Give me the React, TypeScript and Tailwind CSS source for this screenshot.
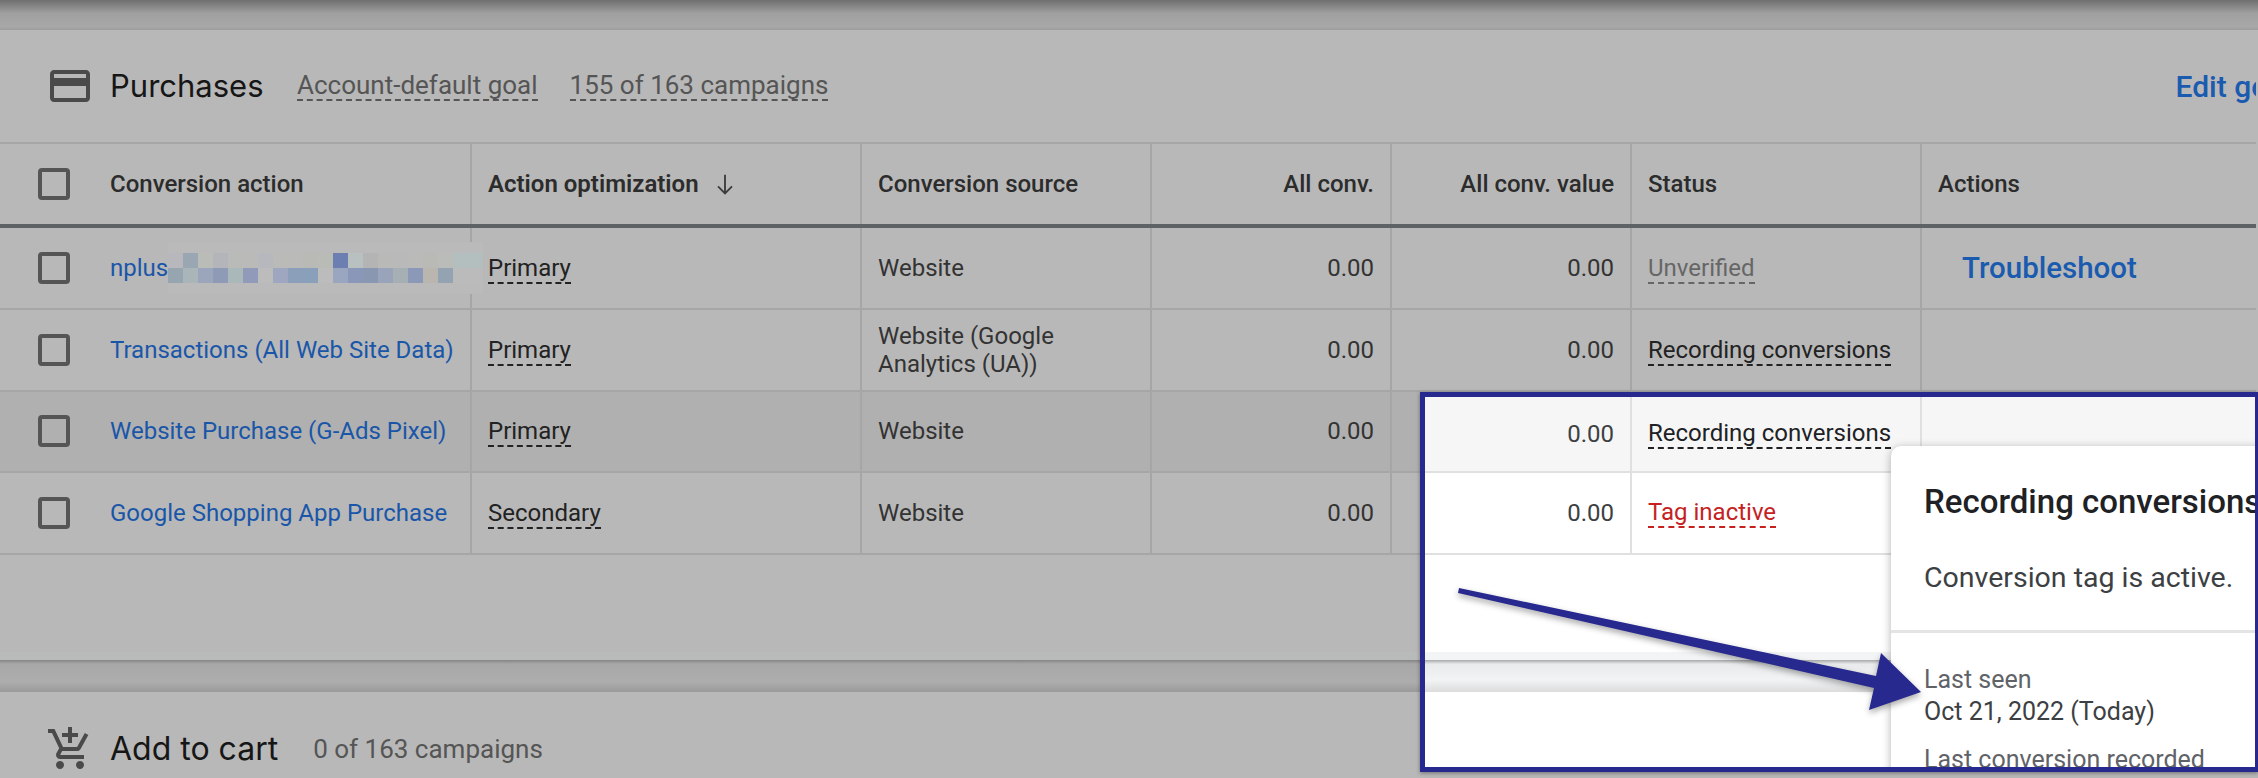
const Dash = ({ children, className = "" }: { children: React.ReactNode; className?: string }) => (
  <span className={`border-b-2 border-dashed leading-[28px] ${className}`}>{children}</span>
);

const Checkbox = () => <div className="w-[32px] h-[32px] rounded-[4px] border-[4px] border-[#555555]" />;

const row1 = ["#b7b7bc","#9aa7b2","#b9bcb7","#b4b4bb","#b9bbb8","#babbb9","#b7b8bd","#babbb9","#babbb9","#b9b9b6","#b9bbb6","#6d7fb0","#b8c1c0","#b3b4b3","#b9b9b7","#b9b9b9","#babab9","#b9bab5","#b9bcb9","#b3bfbf","#b3bfbf"];
const row2 = ["#96a5b0","#a9b5b8","#9ba5bb","#8f9bb6","#abb8ba","#919bb9","#bcbcbc","#9fa6c0","#8c9fba","#8a9fb9","#bcbcbc","#9aa5bf","#8a97b9","#8a97b0","#99a3b9","#a6b0b4","#8b98b8","#bbb5b0","#94a3b1","#bbbbbb","#bbbbbb"];

const Pixels = () => (
  <svg width="315" height="52" viewBox="0 0 315 52" className="shrink-0 -mr-[20px]">
    <rect x="0" y="0" width="315" height="52" fill="#bababa" />
    {row1.map((c, i) => <rect key={i} x={i * 15} y="11" width="15" height="15" fill={c} />)}
    {row2.map((c, i) => <rect key={i} x={i * 15} y="26" width="15" height="15" fill={c} />)}
  </svg>
);

const cols = "grid grid-cols-[472px_390px_290px_240px_240px_290px_1fr]";
const cell = "border-r-2 border-[#a6a6a6] flex items-center";
const num = `${cell} justify-end pr-[16px] text-[#333333]`;
const head = `${cell} text-[24px] font-medium text-[#2c2c2c]`;

type R = { name: string; opt: string; src: React.ReactNode; st: React.ReactNode; h?: boolean };
const rows: R[] = [
  { name: "nplus", opt: "Primary", src: "Website", st: <Dash className="text-[#666666] border-[#666666]">Unverified</Dash> },
  { name: "Transactions (All Web Site Data)", opt: "Primary", src: <span className="leading-[28px]">Website (Google<br />Analytics (UA))</span>, st: <Dash className="text-[#222222] border-[#222222]">Recording conversions</Dash> },
  { name: "Website Purchase (G-Ads Pixel)", opt: "Primary", src: "Website", st: null, h: true },
  { name: "Google Shopping App Purchase", opt: "Secondary", src: "Website", st: null },
];

const HighlightRows = () => (
  <div className="text-[24px]">
    <div className="h-[76px] grid grid-cols-[207px_290px_1fr] bg-[#f6f6f6] border-b-2 border-[#e0e0e0]">
      <div className="border-r-2 border-[#e0e0e0] flex items-center justify-end pr-[16px] text-[#3c4043]">0.00</div>
      <div className="border-r-2 border-[#e0e0e0] flex items-center pl-[16px]"><Dash className="text-[#202124] border-[#202124]">Recording conversions</Dash></div>
      <div />
    </div>
    <div className="h-[82px] grid grid-cols-[207px_290px_1fr] bg-white border-b-2 border-[#e0e0e0]">
      <div className="border-r-2 border-[#e0e0e0] flex items-center justify-end pr-[16px] text-[#3c4043]">0.00</div>
      <div className="border-r-2 border-[#e0e0e0] flex items-center pl-[16px]"><Dash className="text-[#c5221f] border-[#c5221f]">Tag inactive</Dash></div>
      <div />
    </div>
    <div className="h-[97px] bg-white" />
    <div className="h-[8px] bg-[#f3f4f5]" />
    <div className="h-[32px] bg-[linear-gradient(#a8a8a8_0px,#e8eaeb_4px,#f1f3f4_20px,#dcdcdc_32px)]" />
  </div>
);

const Popup = () => (
  <div className="absolute left-[466px] top-[49px] w-[500px] h-[400px] bg-white rounded-tl-[10px] shadow-[0_2px_10px_rgba(0,0,0,0.3)]">
    <div className="h-[187px] border-b-[3px] border-[#e4e4e4] pl-[33px]">
      <div className="pt-[34px] text-[33px] leading-[44px] font-medium text-[#202124] whitespace-nowrap">Recording conversions</div>
      <div className="pt-[38px] text-[28.5px] leading-[32px] text-[#3c4043] whitespace-nowrap">Conversion tag is active.</div>
    </div>
    <div className="pl-[33px] pt-[31px] text-[25px] leading-[32px] whitespace-nowrap">
      <div className="text-[#5f6368]">Last seen</div>
      <div className="text-[#3c4043]">Oct 21, 2022 (Today)</div>
      <div className="pt-[16px] text-[#5f6368]">Last conversion recorded</div>
    </div>
  </div>
);

const Arrow = () => (
  <svg width="490" height="150" viewBox="1450 580 490 150" className="absolute left-[1450px] top-[580px] drop-shadow-[0_3px_3px_rgba(0,0,0,0.35)]">
    <polygon points="1459,588 1876,676 1881,653 1921,692 1869,710 1874,688 1458,593" fill="#28298f" />
  </svg>
);

export default function App() {
  return (
    <div className="relative w-[2258px] h-[778px] overflow-hidden bg-[#b8b8b8] text-[24px]" style={{ fontFamily: "Roboto, sans-serif" }}>
      <div className="h-[30px] bg-[linear-gradient(#6f6f6f,#a0a0a0_45%,#a8a8a8_90%,#9c9c9c)]" />
      <div className="h-[630px] w-[2256px] flex flex-col">
        <div className="h-[114px] border-b-2 border-[#a6a6a6] flex items-center pl-[46px] overflow-hidden shrink-0">
          <svg width="48" height="48" viewBox="0 0 24 24" fill="#4a4a4a" className="shrink-0">
            <path d="M20 4H4c-1.11 0-1.99.89-1.99 2L2 18c0 1.11.89 2 2 2h16c1.11 0 2-.89 2-2V6c0-1.11-.89-2-2-2zm0 14H4v-6h16v6zm0-10H4V6h16v2z" />
          </svg>
          <span className="ml-[16px] text-[31px] text-[#161616] whitespace-nowrap w-[187px]" style={{ fontFamily: "Inter, sans-serif" }}>Purchases</span>
          <Dash className="text-[26px] text-[#555555] border-[#555555] whitespace-nowrap">Account-default goal</Dash>
          <Dash className="ml-[32px] text-[26px] text-[#555555] border-[#555555] whitespace-nowrap">155 of 163 campaigns</Dash>
          <span className="ml-auto mr-[-36px] text-[30px] font-medium text-[#1a5bb0] whitespace-nowrap">Edit goal</span>
        </div>
        <div className={`${cols} h-[84px] border-b-4 border-[#5d6266] shrink-0`}>
          <div className={head}>
            <div className="ml-[38px]"><Checkbox /></div>
            <span className="ml-[40px]">Conversion action</span>
          </div>
          <div className={`${head} pl-[16px] font-semibold`}>
            Action optimization
            <svg width="28" height="28" viewBox="0 0 24 24" fill="none" stroke="#3c3c3c" strokeWidth="1.6" className="ml-[12px]"><path d="M12 4v16M6 14l6 6 6-6" /></svg>
          </div>
          <div className={`${head} pl-[16px]`}>Conversion source</div>
          <div className={`${head} justify-end pr-[16px]`}>All conv.</div>
          <div className={`${head} justify-end pr-[16px]`}>All conv. value</div>
          <div className={`${head} pl-[16px]`}>Status</div>
          <div className="flex items-center pl-[16px] text-[24px] font-medium text-[#2c2c2c]">Actions</div>
        </div>
        {rows.map((r, i) => (
          <div key={i} className={`${cols} h-[81.75px] border-b-2 border-[#a6a6a6] shrink-0 ${r.h ? "bg-[#b0b0b0]" : ""}`}>
            <div className={cell}>
              <div className="ml-[38px]"><Checkbox /></div>
              <span className="ml-[40px] text-[#1a56a8] whitespace-nowrap">{r.name}</span>
              {i === 0 && <Pixels />}
            </div>
            <div className={`${cell} pl-[16px] pt-[2px]`}><Dash className="text-[#222222] border-[#222222]">{r.opt}</Dash></div>
            <div className={`${cell} pl-[16px] text-[#333333]`}>{r.src}</div>
            <div className={num}>0.00</div>
            <div className={num}>0.00</div>
            <div className={`${cell} pl-[16px] pt-[2px]`}>{r.st}</div>
            <div className="flex items-center pl-[40px]">
              {i === 0 && <span className="text-[29.5px] font-medium text-[#1a5bb0]">Troubleshoot</span>}
            </div>
          </div>
        ))}
        <div className="flex-1" />
        <div className="h-[8px] bg-[#b9bbbb] shrink-0" />
      </div>
      <div className="h-[32px] bg-[linear-gradient(#858585_0px,#a8a8a8_4px,#adadad_22px,#9a9a9a_32px)]" />
      <div className="h-[86px] flex items-start pl-[46px] pt-[33px]">
        <svg width="48" height="48" viewBox="0 0 24 24" fill="#4a4a4a" className="shrink-0">
          <path d="M11 9h2V6h3V4h-3V1h-2v3H8v2h3v3zm-4 9c-1.1 0-1.99.9-1.99 2S5.9 22 7 22s2-.9 2-2-.9-2-2-2zm10 0c-1.1 0-1.99.9-1.99 2s.89 2 1.99 2 2-.9 2-2-.9-2-2-2zm-9.83-3.25l.03-.12.9-1.63h7.45c.75 0 1.41-.41 1.75-1.03l3.86-7.01L19.42 4h-.01l-1.1 2-2.76 5H8.53l-.13-.27L6.16 6l-.95-2-.94-2H1v2h2l3.6 7.59-1.35 2.45c-.16.28-.25.61-.25.96 0 1.1.9 2 2 2h12v-2H7.42c-.13 0-.25-.11-.25-.25z" />
        </svg>
        <span className="ml-[16px] text-[32px] text-[#161616] whitespace-nowrap" style={{ fontFamily: "Inter, sans-serif" }}>Add to cart</span>
        <span className="ml-[35px] mt-[5px] text-[26px] text-[#555555] whitespace-nowrap">0 of 163 campaigns</span>
      </div>
      <div className="absolute left-[1420px] top-[392px] right-0 h-[380px] border-[5px] border-r-[3px] border-[#28298f] bg-white overflow-hidden shadow-[0_1px_4px_rgba(0,0,0,0.4)]">
        <HighlightRows />
        <Popup />
      </div>
      <Arrow />
    </div>
  );
}
